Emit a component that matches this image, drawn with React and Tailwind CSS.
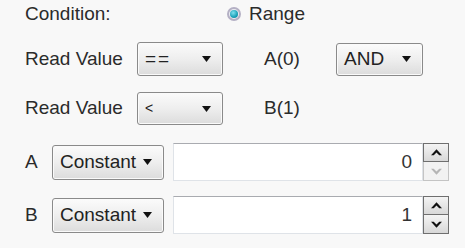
import React from "react";

const font = { fontFamily: '"Liberation Sans", Arial, sans-serif' };

function Arrow({ className = "" }) {
  return (
    <svg width="9" height="6" viewBox="0 0 9 6" className={className}>
      <path d="M0 0 H9 L4.5 6 Z" fill="#111" />
    </svg>
  );
}

function Select({ value, w, h, valueClass = "" }) {
  return (
    <div
      className={`flex items-center justify-between rounded-[3px] border border-[#8a8a8a] bg-gradient-to-b from-[#fbfbfb] via-[#eeeeee] to-[#dcdcdc] pl-[7px] pr-[11px] shadow-[inset_0_0_0_1px_#fafafa] ${w} ${h}`}
    >
      <span className={`text-[#222] ${valueClass}`}>{value}</span>
      <Arrow />
    </div>
  );
}

function Spin({ downDisabled }) {
  return (
    <div className="flex h-[38px] w-[26px] flex-col">
      <div className="flex h-[19px] items-center justify-center border border-[#6f6f6f] bg-gradient-to-b from-[#f4f4f4] to-[#d8d8d8]">
        <svg width="11" height="7" viewBox="0 0 10 6">
          <path d="M0 5.5 L5 0 L10 5.5 L7.5 5.5 L5 3 L2.5 5.5 Z" fill="#111" />
        </svg>
      </div>
      <div
        className={`flex h-[19px] items-center justify-center border border-t-0 ${
          downDisabled
            ? "border-[#c4c4c4] bg-[#f2f2f2]"
            : "border-[#6f6f6f] bg-gradient-to-b from-[#f4f4f4] to-[#d8d8d8]"
        }`}
      >
        <svg width="11" height="7" viewBox="0 0 10 6">
          <path
            d="M0 0.5 L5 6 L10 0.5 L7.5 0.5 L5 3 L2.5 0.5 Z"
            fill={downDisabled ? "#b5b5b5" : "#111"}
          />
        </svg>
      </div>
    </div>
  );
}

function NumberRow({ label, value, downDisabled }) {
  return (
    <div className="flex h-[38px] items-center">
      <span className="w-[27px]">{label}</span>
      <Select value="Constant" w="w-[112px]" h="h-[35px]" />
      <div className="ml-[9px] flex h-[38px] w-[250px] items-center justify-end border border-[#dfe3e8] border-t-[#a9abb0] bg-white pr-[10px] text-[#333]">
        {value}
      </div>
      <Spin downDisabled={downDisabled} />
    </div>
  );
}

export default function App() {
  return (
    <div
      className="h-[248px] w-[465px] bg-[#f8f8f8] pl-[25px] text-[19px] text-[#2b2b2b]"
      style={font}
    >
      <div className="flex h-[27px] items-center pt-[1px]">
        <span className="w-[202px]">Condition:</span>
        <span className="mr-[8px] flex h-[14px] w-[14px] items-center justify-center rounded-full border-2 border-[#b4b0c4] bg-[#ececf2]">
          <span className="h-[8px] w-[8px] rounded-full bg-[radial-gradient(circle_at_40%_35%,#7fe0ee,#1aa0b8_60%,#0f7b90)]" />
        </span>
        <span>Range</span>
      </div>

      <div className="mt-[15px] flex h-[34px] items-center">
        <span className="w-[112px]">Read Value</span>
        <Select value="==" w="w-[86px]" h="h-[34px]" valueClass="tracking-[2px]" />
        <span className="ml-[41px] w-[72px]">A(0)</span>
        <Select value="AND" w="w-[87px]" h="h-[33px]" />
      </div>

      <div className="mt-[16px] flex h-[33px] items-center">
        <span className="w-[112px]">Read Value</span>
        <Select value="<" w="w-[86px]" h="h-[33px]" valueClass="text-[14px]" />
        <span className="ml-[41px]">B(1)</span>
      </div>

      <div className="mt-[18px]">
        <NumberRow label="A" value="0" downDisabled />
      </div>
      <div className="mt-[15px]">
        <NumberRow label="B" value="1" />
      </div>
    </div>
  );
}
